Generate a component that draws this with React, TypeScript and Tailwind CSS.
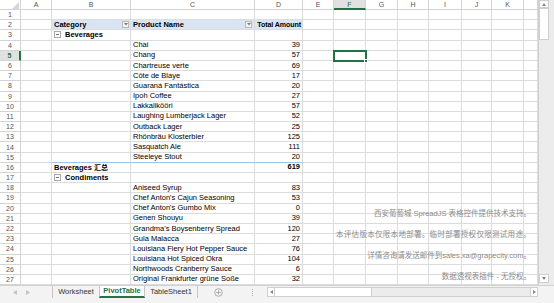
import React from "react";

const products: Record<number, [string, string]> = {
  4: ["Chai", "39"],
  5: ["Chang", "57"],
  6: ["Chartreuse verte", "69"],
  7: ["Côte de Blaye", "17"],
  8: ["Guaraná Fantástica", "20"],
  9: ["Ipoh Coffee", "27"],
  10: ["Lakkalikööri", "57"],
  11: ["Laughing Lumberjack Lager", "52"],
  12: ["Outback Lager", "25"],
  13: ["Rhönbräu Klosterbier", "125"],
  14: ["Sasquatch Ale", "111"],
  15: ["Steeleye Stout", "20"],
  18: ["Aniseed Syrup", "83"],
  19: ["Chef Anton's Cajun Seasoning", "53"],
  20: ["Chef Anton's Gumbo Mix", "0"],
  21: ["Genen Shouyu", "39"],
  22: ["Grandma's Boysenberry Spread", "120"],
  23: ["Gula Malacca", "27"],
  24: ["Louisiana Fiery Hot Pepper Sauce", "76"],
  25: ["Louisiana Hot Spiced Okra", "104"],
  26: ["Northwoods Cranberry Sauce", "6"],
  27: ["Original Frankfurter grüne Soße", "32"],
};

const letters = ["A", "B", "C", "D", "E", "F", "G", "H", "I", "J", "K", ""];

function FilterBtn() {
  return (
    <span className="flex h-[7px] w-[7px] shrink-0 items-center justify-center border border-[#b9b9b9] bg-[#f4f4f4]">
      <svg width="4" height="3" viewBox="0 0 4 3">
        <path d="M0 0 L4 0 L2 2.5 Z" fill="#777" />
      </svg>
    </span>
  );
}

function Collapse() {
  return (
    <span className="ml-[2px] mr-[4px] flex h-[7px] w-[7px] shrink-0 items-center justify-center border border-[#a8a8a8] bg-white">
      <span className="h-[1px] w-[3px] bg-[#777]" />
    </span>
  );
}

function BodyCell({ col, row }: { col: number; row: number }) {
  const blueTop = row === 15 && col >= 2 && col <= 4;
  const base = `flex items-center whitespace-nowrap border-r border-b ${
    blueTop ? "border-b-[#9fc3e7]" : "border-b-[#dcdcdc]"
  } border-r-[#dcdcdc] text-[7.5px] leading-[10px] text-black`;
  let content: React.ReactNode = null;
  let cls = "overflow-hidden";
  if (row === 2 && col >= 2 && col <= 4) {
    cls = "overflow-hidden bg-[#dae5f3] font-bold";
    if (col === 2)
      content = (
        <div className="flex w-full items-center justify-between pl-[2px] pr-[1px]">
          <span>Category</span>
          <FilterBtn />
        </div>
      );
    if (col === 3)
      content = (
        <div className="flex w-full items-center justify-between pl-[2px] pr-[2px]">
          <span>Product Name</span>
          <FilterBtn />
        </div>
      );
    if (col === 4)
      content = (
        <div className="w-full pr-[1px] text-right text-[7.1px] tracking-[-0.1px]">Total Amount</div>
      );
  } else if ((row === 3 || row === 17) && col === 2) {
    cls = "overflow-hidden font-bold";
    content = (
      <div className="flex items-center">
        <Collapse />
        <span>{row === 3 ? "Beverages" : "Condiments"}</span>
      </div>
    );
  } else if (row === 16 && col === 2) {
    cls = "overflow-visible font-bold";
    content = (
      <span className="flex items-center pl-[2px] leading-[9px]">
        <span>Beverages</span>
        <span className="ml-[2px] font-['Noto_Sans_CJK_SC',sans-serif] text-[7px] font-bold leading-[9px]">
          汇总
        </span>
      </span>
    );
  } else if (row === 16 && col === 4) {
    cls = "overflow-hidden font-bold";
    content = <div className="w-full pr-[2px] text-right">619</div>;
  } else if (products[row] && col === 3) {
    content = <span className="pl-[2px]">{products[row][0]}</span>;
  } else if (products[row] && col === 4) {
    content = <div className="w-full pr-[2px] text-right">{products[row][1]}</div>;
  }
  return <div className={`${base} ${cls}`}>{content}</div>;
}

export default function App() {
  const rows = Array.from({ length: 27 }, (_, i) => i + 1);
  return (
    <div className="relative h-[303px] w-[554px] overflow-hidden bg-white font-['Liberation_Sans',Arial,sans-serif]">
      <div className="flex h-[285px]">
        <div className="grid h-[285.4px] w-[538px] grid-cols-[21px_31px_79px_124px_48px_31px_32px_32px_31px_33px_30px_32px_14px] grid-rows-[10px_repeat(27,10.2px)]">
          <div className="relative border-r border-b border-[#d4d4d4] bg-white">
            <svg className="absolute left-[12px] top-[2px]" width="7" height="7" viewBox="0 0 7 7">
              <path d="M7 0 L7 7 L0 7 Z" fill="#d6d6d6" />
            </svg>
          </div>
          {letters.map((l, i) =>
            l === "F" ? (
              <div
                key={i}
                className="flex items-center justify-center border-r border-r-[#d4d4d4] border-b-2 border-b-[#217346] bg-[#e1e1e1] text-[7px] leading-none text-[#217346]"
              >
                F
              </div>
            ) : (
              <div
                key={i}
                className="flex items-center justify-center border-r border-b border-[#d4d4d4] bg-white text-[7px] leading-none text-[#555]"
              >
                {l}
              </div>
            )
          )}
          {rows.map((r) => (
            <React.Fragment key={r}>
              {r === 5 ? (
                <div className="flex items-center justify-center border-b border-b-[#d4d4d4] border-r-2 border-r-[#217346] bg-[#e1e1e1] text-[7px] font-bold leading-none text-[#217346]">
                  {r}
                </div>
              ) : (
                <div className="flex items-center justify-center border-r border-b border-[#d4d4d4] bg-white text-[7px] leading-none text-[#555]">
                  {r}
                </div>
              )}
              {Array.from({ length: 12 }, (_, c) => (
                <BodyCell key={c} col={c + 1} row={r} />
              ))}
            </React.Fragment>
          ))}
        </div>
        <div className="flex h-[285px] w-[16px] flex-col border-l border-[#cfcfcf] bg-[#ececec]">
          <div className="flex h-[8px] w-[10px] items-center justify-center border border-[#cfcfcf] bg-white">
            <svg width="4" height="3" viewBox="0 0 4 3">
              <path d="M0 3 L4 3 L2 0 Z" fill="#888" />
            </svg>
          </div>
          <div className="h-[32px] w-[10px] border border-[#cfcfcf] bg-white" />
          <div className="flex-1" />
          <div className="mb-[2px] flex h-[9px] w-[10px] items-center justify-center border border-[#cfcfcf] bg-white">
            <svg width="4" height="3" viewBox="0 0 4 3">
              <path d="M0 0 L4 0 L2 3 Z" fill="#888" />
            </svg>
          </div>
        </div>
      </div>

      <div className="flex h-[18px] items-start border-t border-[#d0d0d0] bg-[#f3f3f3] text-[7.5px] text-[#333]">
        <div className="flex h-[12px] w-[52px] items-center gap-[9px] pl-[13px]">
          <svg width="4" height="5" viewBox="0 0 4 5">
            <path d="M4 0 L4 5 L0 2.5 Z" fill="#c4c4c4" />
          </svg>
          <svg width="4" height="5" viewBox="0 0 4 5">
            <path d="M0 0 L0 5 L4 2.5 Z" fill="#c4c4c4" />
          </svg>
        </div>
        <div className="flex h-[12px] w-[47px] items-center justify-center border-l border-[#c6c6c6]">
          Worksheet
        </div>
        <div className="flex h-[12px] w-[46px] items-center justify-center border-x border-b-2 border-x-[#c6c6c6] border-b-[#217346] bg-white font-bold text-[#217346]">
          PivotTable
        </div>
        <div className="flex h-[12px] w-[53px] items-center justify-center border-r border-[#c6c6c6]">
          TableSheet1
        </div>
        <div className="flex h-[12px] w-[40px] items-center justify-center">
          <svg width="9" height="9" viewBox="0 0 9 9">
            <circle cx="4.5" cy="4.5" r="3.8" fill="none" stroke="#9a9a9a" strokeWidth="0.8" />
            <path d="M4.5 2.3 V6.7 M2.3 4.5 H6.7" stroke="#9a9a9a" strokeWidth="0.8" />
          </svg>
        </div>
        <div className="flex h-[12px] w-[29px] items-center justify-center">
          <div className="h-[7px] w-[1px] border-l border-dotted border-[#b0b0b0]" />
        </div>
        <div className="mt-[1px] flex h-[10px] w-[271px] items-stretch border border-[#cfcfcf] bg-[#ececec]">
          <div className="flex w-[7px] items-center justify-center border-r border-[#cfcfcf] bg-white">
            <svg width="3" height="4" viewBox="0 0 3 4">
              <path d="M3 0 L3 4 L0 2 Z" fill="#888" />
            </svg>
          </div>
          <div className="w-[97px] border-r border-[#cfcfcf] bg-white" />
          <div className="flex-1" />
          <div className="flex w-[7px] items-center justify-center border-l border-[#cfcfcf] bg-white">
            <svg width="3" height="4" viewBox="0 0 3 4">
              <path d="M0 0 L0 4 L3 2 Z" fill="#888" />
            </svg>
          </div>
        </div>
      </div>

      <div className="absolute left-[333px] top-[50px] h-[12px] w-[34px] border-2 border-[#217346]">
        <div className="absolute -bottom-[3px] -right-[3px] h-[4px] w-[4px] border border-white bg-[#217346]" />
      </div>

      <div className="pointer-events-none absolute right-[23px] top-[209px] flex flex-col items-end gap-[11px] font-['Liberation_Sans','Noto_Sans_CJK_SC',sans-serif] text-[7.5px] leading-[10px] text-[#8c8c8c]">
        <div>西安葡萄城 SpreadJS 表格控件提供技术支持。</div>
        <div className="tracking-[0.3px]">本评估版本仅限本地部署。临时部署授权仅限测试用途。</div>
        <div>详情咨询请发送邮件到sales.xa@grapecity.com。</div>
        <div>数据透视表插件 - 无授权。</div>
      </div>
    </div>
  );
}
